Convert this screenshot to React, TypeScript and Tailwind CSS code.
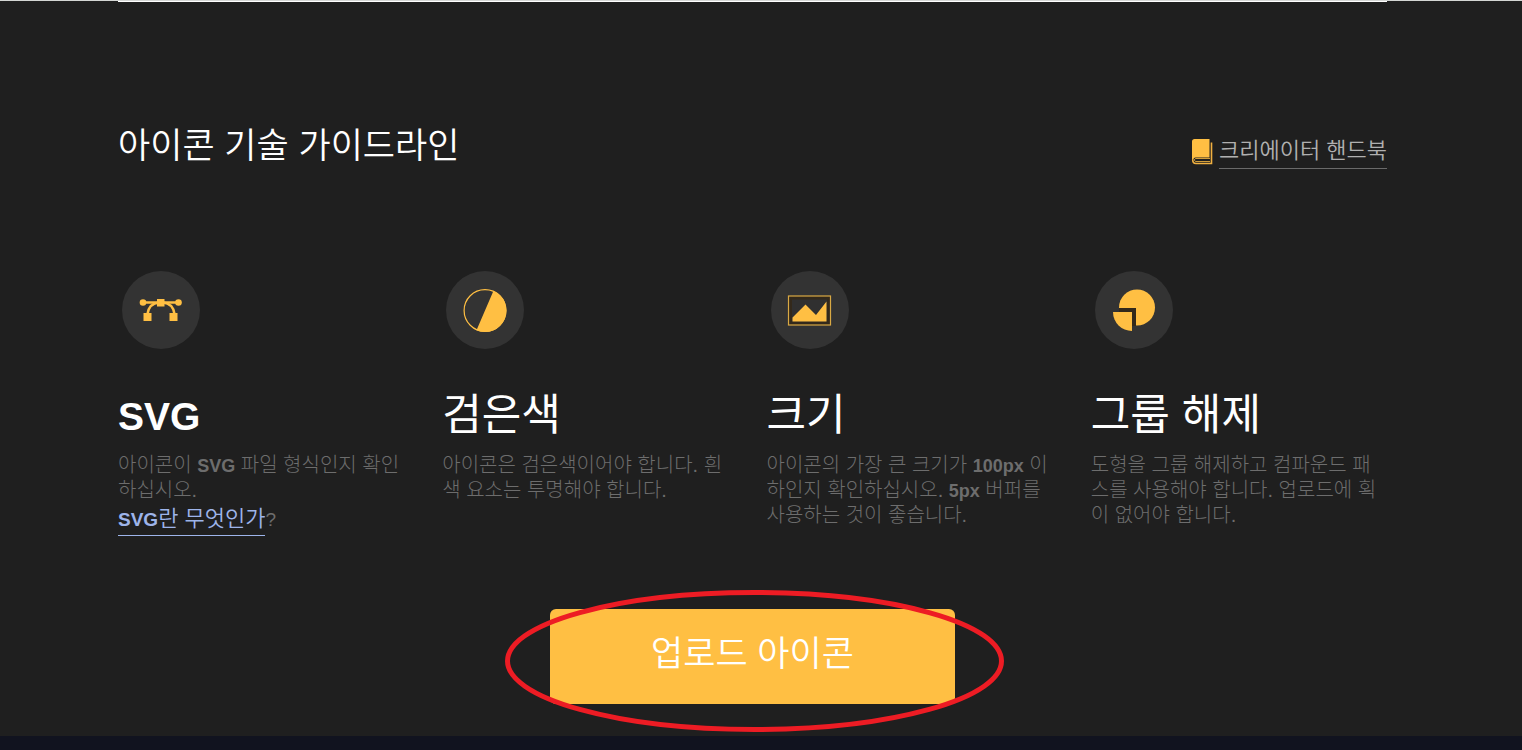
import type { ReactNode } from "react";

const Latin = ({ children }: { children: ReactNode }) => (
  <span className="text-[18px] leading-none font-bold">{children}</span>
);

function VectorIcon() {
  return (
    <svg viewBox="0 0 78 78" className="w-full h-full" fill="#ffbf43" aria-hidden="true">
      <path d="M21 31.5H57" stroke="#ffbf43" strokeWidth="2.5" />
      <path d="M25.5 43C26.5 36 31 32 37 31.5M52.5 43C51.5 36 47 32 41 31.5" fill="none" stroke="#ffbf43" strokeWidth="2.5" />
      <circle cx="21" cy="31.5" r="3.3" />
      <circle cx="56.5" cy="31.5" r="3.3" />
      <rect x="35" y="28" width="7.5" height="7.5" />
      <rect x="21.5" y="42" width="8" height="8" />
      <rect x="47.5" y="42" width="8" height="8" />
    </svg>
  );
}

function ContrastIcon() {
  return (
    <svg viewBox="0 0 78 78" className="w-full h-full" aria-hidden="true">
      <circle cx="39" cy="39.5" r="20.9" fill="none" stroke="#ffbf43" strokeWidth="1.2" />
      <path d="M47.5 19.8A21.5 21.5 0 1 1 30.5 59.3Z" fill="#ffbf43" />
    </svg>
  );
}

function PictureIcon() {
  return (
    <svg viewBox="0 0 78 78" className="w-full h-full" aria-hidden="true">
      <rect x="17.5" y="25" width="42" height="29" fill="#33291b" stroke="#d9a944" strokeWidth="1.2" />
      <rect x="21" y="28.5" width="35" height="22" fill="#303030" />
      <path d="M21.5 50.5V46.5L34.5 33.5L45 44L55.5 30.5V50.5Z" fill="#ffbf43" />
    </svg>
  );
}

function ShapesIcon() {
  return (
    <svg viewBox="0 0 78 78" className="w-full h-full" aria-hidden="true">
      <circle cx="42" cy="36.5" r="18" fill="#ffbf43" />
      <path d="M17 38H41V62H17Z" fill="#333333" />
      <path d="M24 37H41V55H37V41H24Z" fill="#33291b" />
      <path d="M18 41H37V60A19 19 0 0 1 18 41Z" fill="#ffbf43" />
    </svg>
  );
}

function BookIcon() {
  return (
    <svg viewBox="0 0 22 27" className="w-[22px] h-[27px]" aria-hidden="true">
      <path d="M3.5 1H18.5V19.5H4.5C3 19.5 2.5 20.5 2.5 21.5L1 22V3.5C1 2 2 1 3.5 1Z" fill="#ffbf43" />
      <path d="M20.5 4.5V25.5H5C2.5 25.5 1.7 24 1.7 21.5" fill="none" stroke="#f0b040" strokeWidth="1.6" />
      <path d="M19 20.5H5C3 20.5 3 23.5 5 23.5H19" fill="none" stroke="#ffbf43" strokeWidth="0.8" />
    </svg>
  );
}

const guidelines = [
  {
    icon: <VectorIcon />,
    title: <span className="text-[39px] leading-none font-bold">SVG</span>,
    text: (
      <>
        아이콘이 <Latin>SVG</Latin> 파일 형식인지 확인하십시오.
      </>
    ),
    link: true,
  },
  {
    icon: <ContrastIcon />,
    title: "검은색",
    text: "아이콘은 검은색이어야 합니다. 흰색 요소는 투명해야 합니다.",
  },
  {
    icon: <PictureIcon />,
    title: "크기",
    text: (
      <>
        아이콘의 가장 큰 크기가 <Latin>100px</Latin> 이하인지 확인하십시오. <Latin>5px</Latin> 버퍼를 사용하는 것이 좋습니다.
      </>
    ),
  },
  {
    icon: <ShapesIcon />,
    title: "그룹 해제",
    text: "도형을 그룹 해제하고 컴파운드 패스를 사용해야 합니다. 업로드에 획이 없어야 합니다.",
  },
];

export default function App() {
  return (
    <div
      lang="ko"
      className="min-h-screen flex flex-col bg-[#11131f] font-['Liberation_Sans','Noto_Sans_CJK_KR',sans-serif]"
    >
      <main className="bg-[#1f1f1f] border-t border-[#d4d6d4] pl-[118px] pr-[135px] pb-8">
        <div className="h-px bg-white" />

        <header className="flex items-end justify-between pt-[119px]">
          <h1 className="text-[35px] leading-[50px] font-[350] text-white">아이콘 기술 가이드라인</h1>
          <div className="flex items-center gap-x-1.5 pb-0.5">
            <BookIcon />
            <a
              href="#handbook"
              className="text-[22px] leading-[34px] font-[350] text-[#b0b0b0] border-b border-[#6a6a6a]"
            >
              크리에이터 핸드북
            </a>
          </div>
        </header>

        <div className="grid grid-cols-4 gap-x-7 pt-[100px]">
          {guidelines.map((item, i) => (
            <section key={i}>
              <div className="ml-1 w-[78px] h-[78px] rounded-full bg-[#333333]">{item.icon}</div>
              <h2 className="mt-9 h-[60px] text-[43px] leading-[60px] font-normal text-white">{item.title}</h2>
              <p className="mt-2 text-[20px] leading-[25px] font-light text-[#6d6d6d]">{item.text}</p>
              {item.link && (
                <p className="flex items-baseline text-[22px] leading-[32px] font-[350] text-[#6d6d6d]">
                  <a href="#svg" className="border-b border-[#9db4ea] text-[#9db4ea]">
                    <span className="text-[19px] leading-none font-bold">SVG</span>란 무엇인가
                  </a>
                  <span className="text-[19px] leading-none">?</span>
                </p>
              )}
            </section>
          ))}
        </div>

        <div className="flex justify-center pt-[73px]">
          <div className="relative">
            <button
              type="button"
              className="block w-[405px] h-[95px] pb-1 rounded-md bg-[#ffbf43] text-[35px] font-[350] text-white"
            >
              업로드 아이콘
            </button>
            <svg
              viewBox="0 0 499 142"
              className="absolute -left-[45px] -top-[19px] w-[499px] h-[142px] max-w-none pointer-events-none"
              aria-hidden="true"
            >
              <ellipse cx="249.5" cy="71" rx="247" ry="68.5" fill="none" stroke="#ed1c24" strokeWidth="5" />
            </svg>
          </div>
        </div>
      </main>
    </div>
  );
}
